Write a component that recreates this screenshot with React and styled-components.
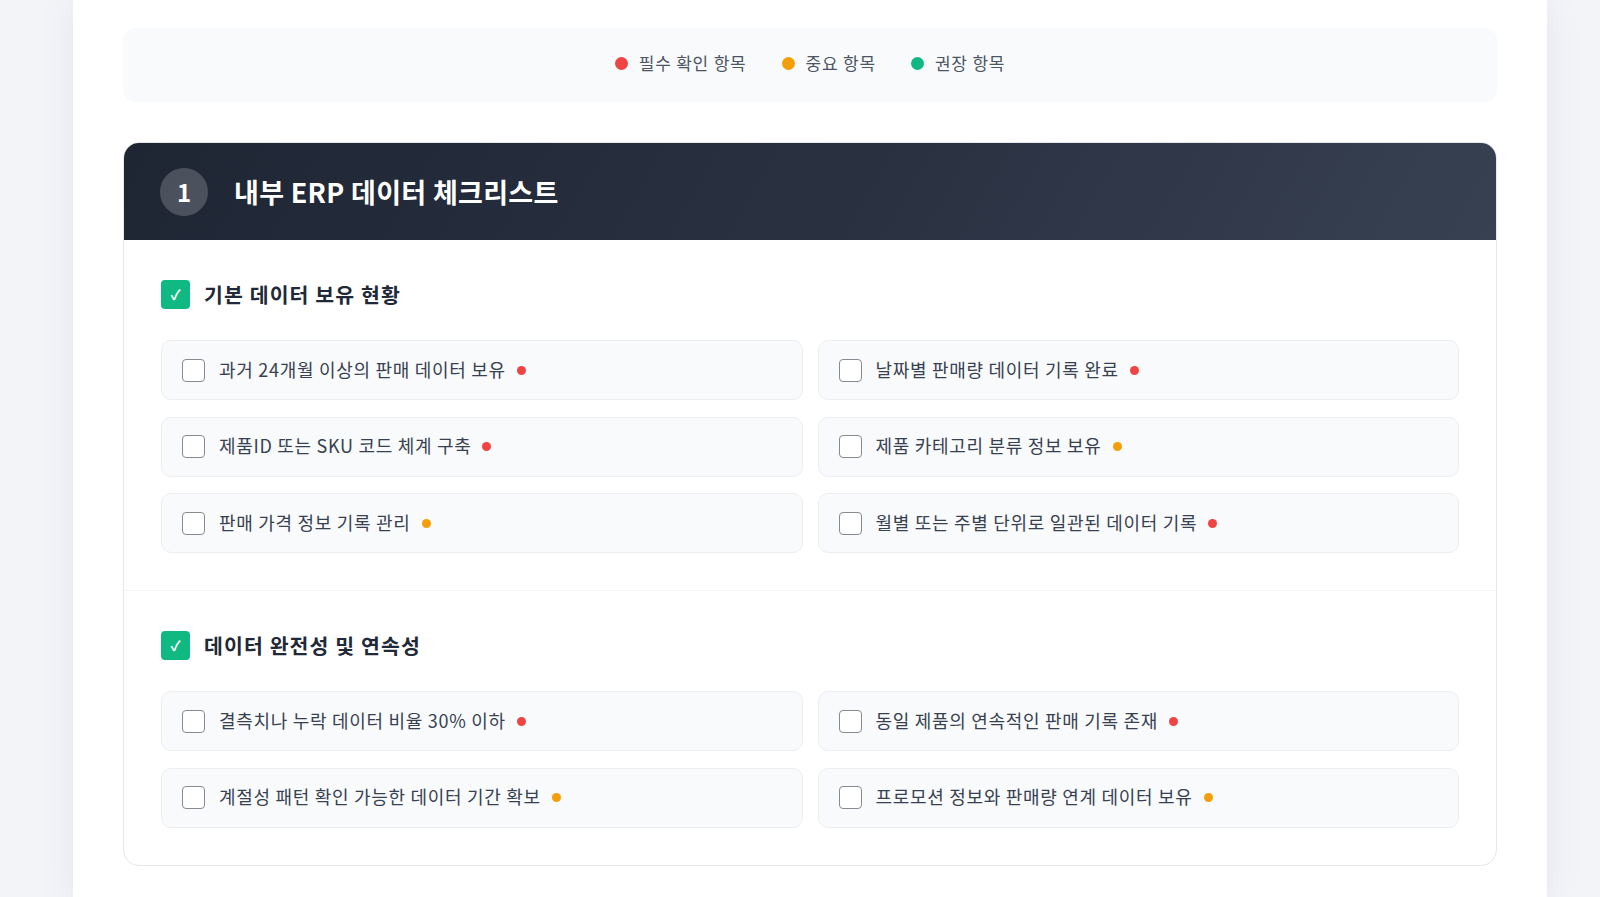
import React from 'react';
import styled, { createGlobalStyle } from 'styled-components';

const GlobalStyle = createGlobalStyle`
  * { box-sizing: border-box; }
  body {
    margin: 0;
    background: #f3f4f8;
    font-family: "Noto Sans CJK KR", "Noto Sans", sans-serif;
    color: #374151;
  }
`;

const Page = styled.div`
  margin: 0 53px 0 73px;
  min-height: 897px;
  background: #ffffff;
  box-shadow: 0 0 40px rgba(30, 40, 80, 0.06);
  padding: 28px 50px 40px;
`;

const Legend = styled.div`
  display: flex;
  justify-content: center;
  align-items: center;
  gap: 35px;
  background: #f9fafb;
  border-radius: 12px;
  padding: 20px 0 24px;
  margin-bottom: 40px;
`;

const LegendItem = styled.div`
  display: flex;
  align-items: center;
  gap: 11px;
  font-size: 17px;
  letter-spacing: 0.8px;
  line-height: 30px;
  color: #4b5563;
`;

const LegendDot = styled.span`
  width: 13px;
  height: 13px;
  border-radius: 50%;
  background: ${({ color }) => color};
`;

const Card = styled.div`
  border: 1px solid #e5e7eb;
  border-radius: 16px;
  overflow: hidden;
  background: #fff;
`;

const CardHeader = styled.div`
  display: flex;
  align-items: center;
  gap: 26px;
  height: 97px;
  padding: 0 36px;
  background: linear-gradient(120deg, #1e2533 0%, #2a3242 55%, #384151 100%);
`;

const StepBadge = styled.div`
  width: 48px;
  height: 48px;
  border-radius: 50%;
  background: rgba(255, 255, 255, 0.2);
  color: #fff;
  font-size: 24px;
  font-weight: 700;
  display: flex;
  align-items: center;
  justify-content: center;
`;

const CardTitle = styled.h2`
  margin: 0;
  color: #fff;
  font-size: 27px;
  font-weight: 700;
  letter-spacing: 0.3px;
`;

const Section = styled.div`
  padding: 39px 37px 37px;
  & + & {
    border-top: 1px solid #f3f4f6;
  }
`;

const SectionHead = styled.div`
  display: flex;
  align-items: center;
  gap: 14px;
  height: 30px;
  margin-bottom: 31px;
`;

const DoneBox = styled.span`
  width: 29px;
  height: 29px;
  border-radius: 4px;
  background: #10b981;
  color: #fff;
  font-size: 14px;
  font-weight: 700;
  display: flex;
  align-items: center;
  justify-content: center;
`;

const SectionTitle = styled.h3`
  margin: 0;
  font-size: 20.5px;
  letter-spacing: 1.1px;
  font-weight: 700;
  color: #1f2937;
`;

const Grid = styled.div`
  display: grid;
  grid-template-columns: 1fr 1fr;
  column-gap: 15px;
  row-gap: 16.5px;
`;

const Item = styled.label`
  display: flex;
  align-items: center;
  height: 60px;
  padding: 0 20px 3px;
  background: #f9fafb;
  border: 1px solid #eceef1;
  border-radius: 10px;
  font-size: 18px;
  letter-spacing: 0.7px;
  color: #374151;
  cursor: pointer;
`;

const Box = styled.span`
  flex: none;
  width: 23px;
  height: 23px;
  margin-top: 3px;
  border: 1.5px solid #868a92;
  border-radius: 4px;
  background: #fff;
  margin-right: 14px;
`;

const PriorityDot = styled.span`
  flex: none;
  width: 9px;
  height: 9px;
  border-radius: 50%;
  margin-left: 11px;
  margin-top: 3px;
  background: ${({ color }) => color};
`;

const RED = '#ef4444';
const ORANGE = '#f59e0b';
const GREEN = '#10b981';

const sections = [
  {
    title: '기본 데이터 보유 현황',
    items: [
      ['과거 24개월 이상의 판매 데이터 보유', RED],
      ['날짜별 판매량 데이터 기록 완료', RED],
      ['제품ID 또는 SKU 코드 체계 구축', RED],
      ['제품 카테고리 분류 정보 보유', ORANGE],
      ['판매 가격 정보 기록 관리', ORANGE],
      ['월별 또는 주별 단위로 일관된 데이터 기록', RED],
    ],
  },
  {
    title: '데이터 완전성 및 연속성',
    items: [
      ['결측치나 누락 데이터 비율 30% 이하', RED],
      ['동일 제품의 연속적인 판매 기록 존재', RED],
      ['계절성 패턴 확인 가능한 데이터 기간 확보', ORANGE],
      ['프로모션 정보와 판매량 연계 데이터 보유', ORANGE],
    ],
  },
];

function App() {
  return (
    <>
      <GlobalStyle />
      <Page>
        <Legend>
          <LegendItem><LegendDot color={RED} />필수 확인 항목</LegendItem>
          <LegendItem><LegendDot color={ORANGE} />중요 항목</LegendItem>
          <LegendItem><LegendDot color={GREEN} />권장 항목</LegendItem>
        </Legend>

        <Card>
          <CardHeader>
            <StepBadge>1</StepBadge>
            <CardTitle>내부 ERP 데이터 체크리스트</CardTitle>
          </CardHeader>

          {sections.map((s) => (
            <Section key={s.title}>
              <SectionHead>
                <DoneBox>✓</DoneBox>
                <SectionTitle>{s.title}</SectionTitle>
              </SectionHead>
              <Grid>
                {s.items.map(([text, color]) => (
                  <Item key={text}>
                    <Box />
                    {text}
                    <PriorityDot color={color} />
                  </Item>
                ))}
              </Grid>
            </Section>
          ))}
        </Card>
      </Page>
    </>
  );
}

export default App;
